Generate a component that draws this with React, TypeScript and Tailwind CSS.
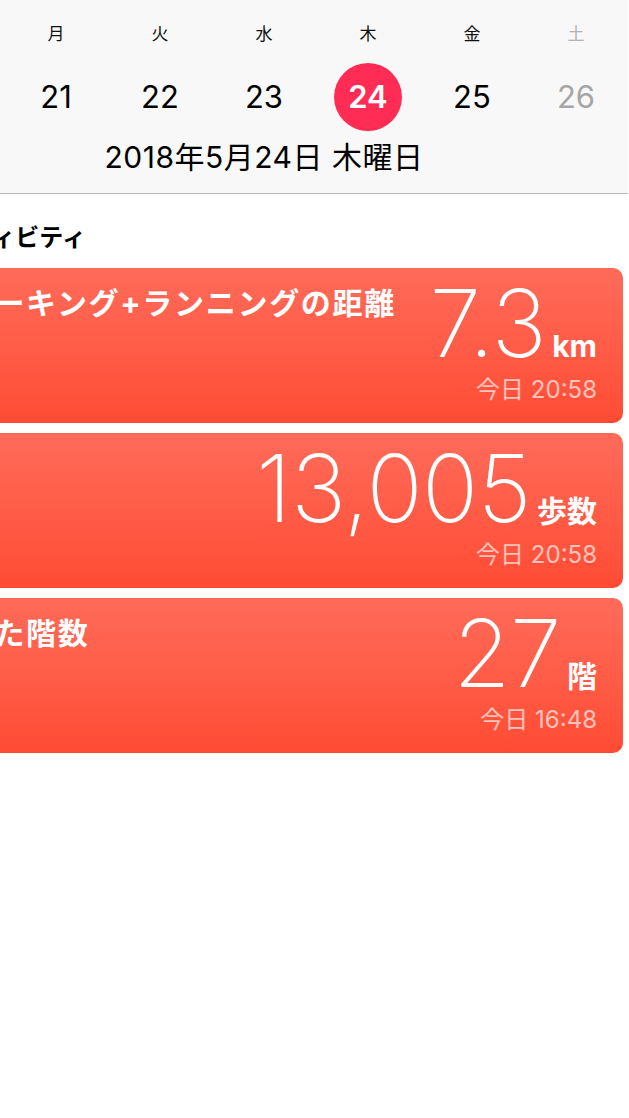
import React from "react"

const days = [
  { label: "日", num: "20", muted: true },
  { label: "月", num: "21" },
  { label: "火", num: "22" },
  { label: "水", num: "23" },
  { label: "木", num: "24", today: true },
  { label: "金", num: "25" },
  { label: "土", num: "26", muted: true },
]

const cards = [
  { title: "ウォーキング+ランニングの距離", value: "7.3", unit: "km", time: "今日 20:58" },
  { title: "歩数", value: "13,005", unit: "歩数", time: "今日 20:58" },
  { title: "上った階数", value: "27", unit: "階", time: "今日 16:48" },
]

const font = { fontFamily: '"Inter", "Noto Sans CJK JP", sans-serif' }

export default function App() {
  return (
    <div className="w-[629px] min-h-[1118px] overflow-hidden bg-white text-black" style={font}>
      {/* full screen is wider than the crop, left part sits off-screen */}
      <div className="ml-[-100px] w-[728px]">
        {/* week strip */}
        <div className="h-[194px] bg-[#f8f8f8] border-b border-[#b8b8b8] pt-[20px]">
          <div className="grid grid-cols-7">
            {days.map((d) => (
              <div key={d.num} className="flex flex-col items-center">
                <div
                  className={`h-[28px] leading-[28px] text-[17px] ${
                    d.muted ? "text-[#b3b3b3]" : "text-[#111]"
                  }`}
                >
                  {d.label}
                </div>
                <div
                  className={`mt-[15px] w-[68px] h-[68px] rounded-full flex items-center justify-center text-[31px] ${
                    d.today
                      ? "bg-[#ff2d55] text-white font-semibold"
                      : d.muted
                        ? "text-[#a6a6a6]"
                        : "text-black"
                  }`}
                >
                  {d.num}
                </div>
              </div>
            ))}
          </div>
          <div className="mt-[8px] h-[36px] leading-[36px] text-center text-[30px] tracking-[0.5px]">
            2018年5月24日 木曜日
          </div>
        </div>

        {/* activity */}
        <div className="mt-[28px] px-[22px] h-[32px] leading-[32px] text-[24px] font-semibold">
          アクティビティ
        </div>

        <div className="mt-[14px] flex flex-col gap-[10px] mx-[5px]">
          {cards.map((c) => (
            <div
              key={c.title}
              className="h-[155px] rounded-[10px] bg-gradient-to-b from-[#ff6b59] to-[#ff4b33] text-white flex justify-between items-start pl-[26px] pr-[26px]"
            >
              <div className="pt-[15px] h-[40px] leading-[40px] text-[30px] font-bold tracking-[1.7px] whitespace-nowrap box-content">
                {c.title}
              </div>
              <div className="pt-[8px] flex flex-col items-end">
                <div className="flex items-baseline h-[94px]">
                  <span className="text-[93px] leading-[94px] font-extralight tracking-[-0.5px]">
                    {c.value}
                  </span>
                  <span className="ml-[6px] text-[30px] leading-none font-bold">{c.unit}</span>
                </div>
                <div className="mt-[6px] h-[28px] leading-[28px] text-[24px] text-white/65">
                  {c.time}
                </div>
              </div>
            </div>
          ))}
        </div>
      </div>
    </div>
  )
}
